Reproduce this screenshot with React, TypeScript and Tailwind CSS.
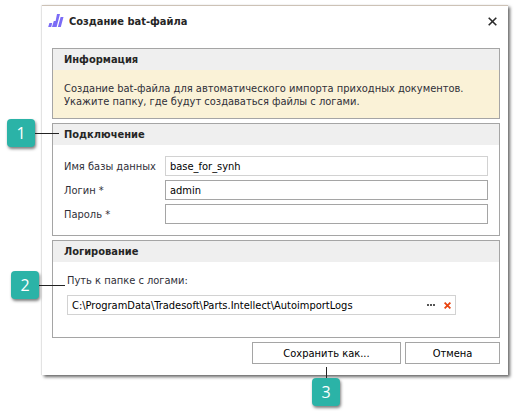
import React, { useState } from "react";
import type { ReactNode } from "react";

type CalloutProps = { label: string; className: string; direction: "right" | "up"; lineClass: string };

function Callout({ label, className, direction, lineClass }: CalloutProps) {
  return (
    <div className={`absolute flex items-center ${direction === "up" ? "flex-col" : ""} ${className}`}>
      {direction === "up" && <span className={`w-px bg-[#222] ${lineClass}`} />}
      <span className="flex size-7 shrink-0 items-center justify-center rounded-[4px] bg-[#2bb3a7] font-['Open_Sans',sans-serif] text-base leading-7 text-white shadow-[1px_2px_3px_0_rgba(0,0,0,0.5)]">
        {label}
      </span>
      {direction === "right" && <span className={`h-px bg-[#222] ${lineClass}`} />}
    </div>
  );
}

function Panel({ title, children, callout }: { title: string; children: ReactNode; callout?: ReactNode }) {
  return (
    <section className="relative border border-[#a5a5a5]">
      <h2 className="bg-[#efefef] px-[11px] leading-[21px] font-bold text-[#262626]">{title}</h2>
      {children}
      {callout}
    </section>
  );
}

type FieldProps = { id: string; label: string; type?: string; value?: string; readOnly?: boolean };

function Field({ id, label, type = "text", value = "", readOnly = false }: FieldProps) {
  const [text, setText] = useState(value);
  return (
    <div className="flex items-center">
      <label htmlFor={id} className="w-[101px] shrink-0 text-[#2f2f38]">{label}</label>
      <input
        id={id}
        type={type}
        value={text}
        readOnly={readOnly}
        onChange={(e) => setText(e.target.value)}
        className={`h-5 min-w-0 flex-1 border bg-white px-1 text-black outline-none ${readOnly ? "border-[#d2d2d2]" : "border-[#a5a5a5]"}`}
      />
    </div>
  );
}

const buttonClass =
  "relative h-[22px] border border-[#a5a5a5] bg-white text-center text-black";

export default function App() {
  return (
    <main className="bg-white pt-[5px] pr-[9px] pb-[42px] pl-[42px] font-['DejaVu_Sans_Condensed','DejaVu_Sans',sans-serif] text-[11px] leading-[13px]">
      <div role="dialog" aria-labelledby="title" className="border-t border-[#cdc2b6] bg-white px-[10px] pr-2 pb-[11px] shadow-[2px_2px_3px_0_rgba(0,0,0,0.6),-1px_0_1px_0_rgba(0,0,0,0.08)]">
        <header className="flex h-[42px] items-start pt-[7px]">
          <svg viewBox="0 0 16 16" className="-ml-1 size-4" fill="#7b6cf6" aria-hidden="true">
            <path d="M1.4 10h2.8l-1 4H.2zM5.8 8h2.4l-1.8 6H4zM9 1h3L8.6 14H5.8l1.8-6zM12.6 4h2.9l-2.7 10h-2.9z" />
          </svg>
          <h1 id="title" className="flex-1 pl-[5px] leading-[17px] font-bold text-[#262626]">Создание bat-файла</h1>
          <button type="button" aria-label="Закрыть" className="flex size-4 items-center justify-center">
            <svg viewBox="0 0 9 9" className="size-[9px]" fill="none" stroke="#2b2b2b" strokeWidth="1.6" aria-hidden="true">
              <path d="M.7.7l7.6 7.6M8.3.7L.7 8.3" />
            </svg>
          </button>
        </header>

        <div className="flex flex-col gap-1">
          <Panel title="Информация">
            <p className="bg-[#faf2d7] px-[11px] pt-3 pb-[10px] text-[#2f2f38]">
              Создание bat-файла для автоматического импорта приходных документов.
              <br />
              Укажите папку, где будут создаваться файлы с логами.
            </p>
          </Panel>

          <Panel
            title="Подключение"
            callout={<Callout label="1" direction="right" className="top-[-5px] left-[-46px]" lineClass="w-6" />}
          >
            <div className="flex flex-col gap-1 px-[11px] pt-[11px] pb-[11px]">
              <Field id="db" label="Имя базы данных" value="base_for_synh" readOnly />
              <Field id="login" label="Логин *" value="admin" />
              <Field id="password" label="Пароль *" type="password" />
            </div>
          </Panel>

          <Panel
            title="Логирование"
            callout={<Callout label="2" direction="right" className="top-[30px] left-[-42px]" lineClass="w-[26px]" />}
          >
            <div className="pt-3 pr-[43px] pb-[22px] pl-[14px]">
              <label htmlFor="path" className="block text-[#2f2f38]">Путь к папке с логами:</label>
              <div className="mt-2 flex h-5 items-center border border-[#d2d2d2] bg-white">
                <input
                  id="path"
                  type="text"
                  defaultValue="C:\ProgramData\Tradesoft\Parts.Intellect\AutoimportLogs"
                  className="h-full min-w-0 flex-1 px-1 text-black outline-none"
                />
                <button type="button" aria-label="Выбрать папку" className="flex h-full w-4 items-center justify-center">
                  <svg viewBox="0 0 8 2" className="h-[2px] w-2" fill="#555" aria-hidden="true">
                    <path d="M0 0h2v2H0zM3 0h2v2H3zM6 0h2v2H6z" />
                  </svg>
                </button>
                <button type="button" aria-label="Очистить" className="flex h-full w-4 items-center justify-center">
                  <svg viewBox="0 0 7 7" className="size-[7px]" fill="none" stroke="#e8430f" strokeWidth="1.8" aria-hidden="true">
                    <path d="M.6.6l5.8 5.8M6.4.6L.6 6.4" />
                  </svg>
                </button>
              </div>
            </div>
          </Panel>

          <footer className="flex justify-end gap-1">
            <button type="button" className={`${buttonClass} w-[149px]`}>
              Сохранить как...
              <Callout label="3" direction="up" className="top-6 left-[59px]" lineClass="h-[11px]" />
            </button>
            <button type="button" className={`${buttonClass} w-[95px]`}>Отмена</button>
          </footer>
        </div>
      </div>
    </main>
  );
}
